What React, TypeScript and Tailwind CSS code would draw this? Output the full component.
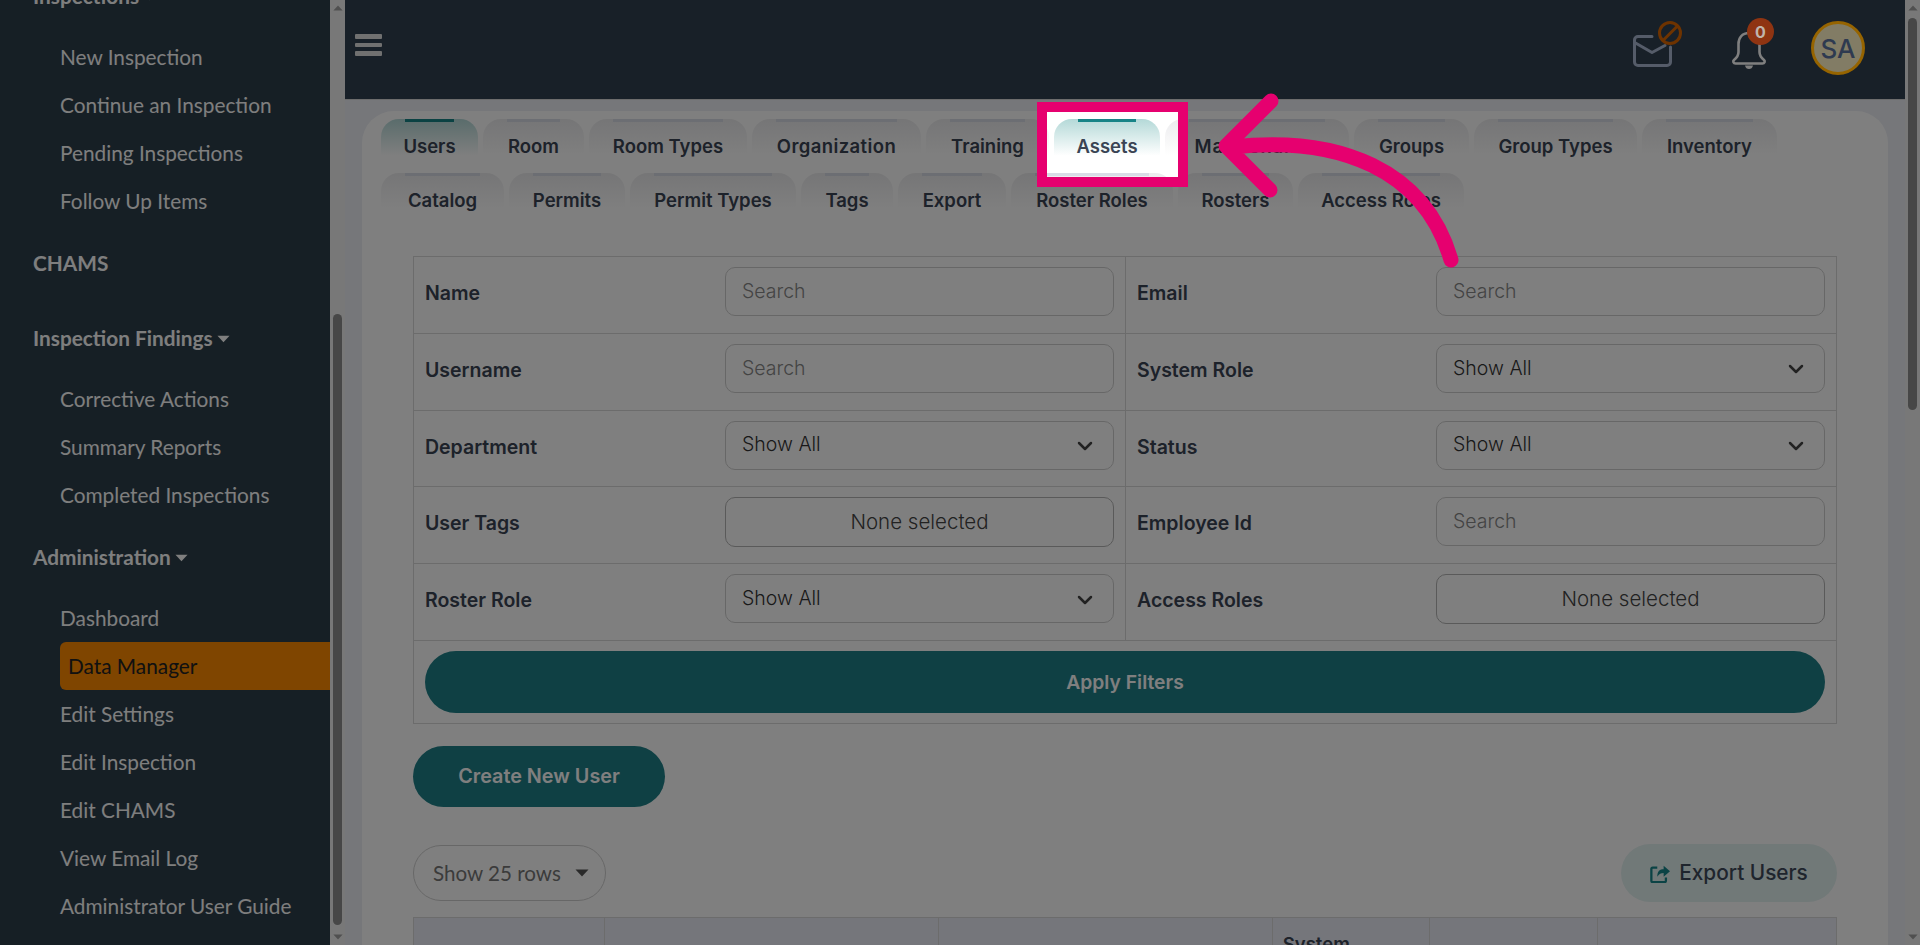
import { ChevronDown } from "lucide-react";

const sans = "font-['Inter','Noto_Sans',sans-serif]";

const tabRows = [
  [
    { name: "Users", w: "w-[97px]", active: true },
    { name: "Room", w: "w-[101px]" },
    { name: "Room Types", w: "w-[158px]" },
    { name: "Organization", w: "w-[169px] tracking-[0.4px]" },
    { name: "Training", w: "w-[123px]" },
    { name: "Assets", w: "w-[106px]", active: true },
    { name: "Maintenance", w: "w-[184px] tracking-[0.8px]" },
    { name: "Groups", w: "w-[115px]" },
    { name: "Group Types", w: "w-[163px]" },
    { name: "Inventory", w: "w-[135px]" },
  ],
  [
    { name: "Catalog", w: "w-[123px]" },
    { name: "Permits", w: "w-[116px]" },
    { name: "Permit Types", w: "w-[166px]" },
    { name: "Tags", w: "w-[92px]" },
    { name: "Export", w: "w-[108px]" },
    { name: "Roster Roles", w: "w-[162px]" },
    { name: "Rosters", w: "w-[115px]" },
    { name: "Access Roles", w: "w-[166px]" },
  ],
];

const filters = [
  { label: "Name", kind: "search" },
  { label: "Email", kind: "search" },
  { label: "Username", kind: "search" },
  { label: "System Role", kind: "select" },
  { label: "Department", kind: "select" },
  { label: "Status", kind: "select" },
  { label: "User Tags", kind: "multi" },
  { label: "Employee Id", kind: "search" },
  { label: "Roster Role", kind: "select" },
  { label: "Access Roles", kind: "multi" },
];

const columns = [
  { w: "w-[191px]", label: "" },
  { w: "w-[335px]", label: "" },
  { w: "w-[334px]", label: "" },
  { w: "w-[157px]", label: "System" },
  { w: "w-[169px]", label: "" },
  { w: "w-[238px]", label: "" },
];

function Caret({ className }: { className: string }) {
  return (
    <svg viewBox="0 0 14 8" className={className}>
      <path d="M0.5 0.5h13L7 7.5z" fill="currentColor" />
    </svg>
  );
}

function NavHead({ label, caret, className }: { label: string; caret?: boolean; className?: string }) {
  return (
    <div className={`flex h-[48px] items-center gap-[4px] pl-[33px] text-[20.800px] font-bold text-[#fdfdfd] ${className ?? ""}`}>
      {label}
      {caret && <Caret className="mt-[1px] h-[8px] w-[13px] text-white" />}
    </div>
  );
}

function NavItem({ label, active }: { label: string; active?: boolean }) {
  if (active) {
    return (
      <div className="ml-[60px] flex h-[48px] items-center rounded-l-[6px] bg-[#fe8a00] pl-[8px] text-[20.800px] text-[#222]">
        {label}
      </div>
    );
  }
  return <div className="flex h-[48px] items-center pl-[60px] text-[20.800px] text-[#fdfdfd]">{label}</div>;
}

function Sidebar() {
  return (
    <aside className="h-full w-[330px] shrink-0 overflow-hidden bg-[#2c3e4a] font-['Lato',sans-serif]">
      <div className="-mt-[28px]">
        <NavHead label="Inspections" caret className="mb-[13px]" />
        <NavItem label="New Inspection" />
        <NavItem label="Continue an Inspection" />
        <NavItem label="Pending Inspections" />
        <NavItem label="Follow Up Items" />
        <NavHead label="CHAMS" className="mt-[14px]" />
        <NavHead label="Inspection Findings" caret className="mt-[27px] mb-[13px]" />
        <NavItem label="Corrective Actions" />
        <NavItem label="Summary Reports" />
        <NavItem label="Completed Inspections" />
        <NavHead label="Administration" caret className="mt-[14px] mb-[13px]" />
        <NavItem label="Dashboard" />
        <NavItem label="Data Manager" active />
        <NavItem label="Edit Settings" />
        <NavItem label="Edit Inspection" />
        <NavItem label="Edit CHAMS" />
        <NavItem label="View Email Log" />
        <NavItem label="Administrator User Guide" />
      </div>
    </aside>
  );
}

function Scrollbar({ thumb }: { thumb: string }) {
  return (
    <div className="flex h-full w-[15px] shrink-0 flex-col items-center bg-[#f1f1f1] py-[4px]">
      <Caret className="h-[8px] w-[10px] rotate-180 text-[#a0a0a0]" />
      <div className={`mt-[6px] w-[9px] rounded-full bg-[#8f8f8f] ${thumb}`} />
      <div className="flex-1" />
      <Caret className="h-[8px] w-[10px] text-[#a0a0a0]" />
    </div>
  );
}

function Header() {
  return (
    <header className="flex h-[100px] shrink-0 justify-between border-b border-[#d8d8d8] bg-[#314050] pr-[40px] pl-[10px]">
      <div className="mt-[34px] flex h-[22px] w-[27px] flex-col gap-[4px]">
        <div className="h-[5px] rounded-[1px] bg-[#e0e0e0]" />
        <div className="h-[5px] rounded-[1px] bg-[#e0e0e0]" />
        <div className="h-[5px] rounded-[1px] bg-[#e0e0e0]" />
      </div>
      <div className="flex items-start pt-[21px]">
        <svg viewBox="0 0 50 48" className="h-[48px] w-[50px]">
          <path
            d="M20 15.500H6A3.500 3.500 0 0 0 2.500 19v22A3.500 3.500 0 0 0 6 44.500h29a3.500 3.500 0 0 0 3.500-3.500V26M3.500 22 20 31.500 33 24.500"
            fill="none"
            stroke="#aab8d2"
            strokeWidth="3"
            strokeLinecap="round"
            strokeLinejoin="round"
          />
          <circle cx="38" cy="12" r="10.500" fill="none" stroke="#dc6600" strokeWidth="3" />
          <path d="M31 19.500 45.500 5" stroke="#dc6600" strokeWidth="3" />
        </svg>
        <div className="relative ml-[49px] h-[48px] w-[36px]">
          <svg viewBox="0 0 36 40" className="absolute top-[9px] left-0 h-[40px] w-[36px]">
            <path
              d="M18 3c-7 0-10.500 5-10.500 11v8c0 4-2 6-4.500 8-1.500 1.500-.5 3.500 1.500 3.500h27c2 0 3-2 1.500-3.500-2.500-2-4.500-4-4.500-8v-8C28.500 8 25 3 18 3z"
              fill="none"
              stroke="#ffffff"
              strokeWidth="2.600"
            />
            <path d="M14 35.500h8c-.5 2.500-2 3.500-4 3.500s-3.500-1-4-3.500z" fill="#ffffff" />
          </svg>
          <div className={`absolute -top-[3px] left-[16px] z-30 flex h-[27px] w-[27px] items-center justify-center rounded-full bg-[#8f3412] text-[16px] font-bold text-[#c0b4ac] ${sans}`}>
            0
          </div>
        </div>
        <div className={`relative z-30 ml-[44px] flex h-[54px] w-[54px] items-center justify-center rounded-full border-[3px] border-[#966400] bg-[#827c65] text-[26px] font-medium text-[#2e3a50] ${sans}`}>
          SA
        </div>
      </div>
    </header>
  );
}

function Tab({ name, w, active }: { name: string; w: string; active?: boolean }) {
  return (
    <div
      className={`flex h-[53.500px] shrink-0 flex-col rounded-t-[18px] bg-gradient-to-b to-white to-[68%] ${w} ${
        active ? "from-[#b4d9d8]" : "from-[#ececee]"
      }`}
    >
      <div className={`mx-[24px] h-[3px] ${active ? "bg-[#178487]" : "bg-[#d9dce6]"}`} />
      <div className="mt-[11px] text-center text-[18.500px] leading-[26px] font-semibold whitespace-nowrap text-[#3a4454]">
        {name}
      </div>
    </div>
  );
}

function Filter({ label, kind }: { label: string; kind: string }) {
  return (
    <div className="flex h-[76.800px] items-start justify-between border-r border-b border-[#d9d9d9] pt-[10px] pr-[11px] pl-[11px] even:border-r-0">
      <span className="pt-[13px] text-[19.500px] leading-[26px] font-semibold text-[#3a4454]">{label}</span>
      {kind === "search" && (
        <div className="flex h-[49px] w-[389px] items-center rounded-[10px] border border-[#cfcfcf] pl-[16px] text-[19.500px] font-light text-[#888]">
          Search
        </div>
      )}
      {kind === "select" && (
        <div className="flex h-[49px] w-[389px] items-center justify-between rounded-[10px] border border-[#cfcfcf] pr-[16px] pl-[16px] text-[19.500px] font-light text-[#333]">
          Show All
          <ChevronDown className="mt-[2px] h-[24px] w-[24px] text-[#444]" strokeWidth={2.500} />
        </div>
      )}
      {kind === "multi" && (
        <div className="flex h-[50px] w-[389px] items-center justify-center rounded-[10px] border border-[#b4b4b4] text-[20.500px] font-light text-[#444]">
          None selected
        </div>
      )}
    </div>
  );
}

export default function App() {
  return (
    <div className={`relative flex h-[945px] w-[1920px] overflow-hidden ${sans}`}>
      <Sidebar />
      <Scrollbar thumb="hidden" />
      <main className="flex h-full min-w-0 flex-1 flex-col bg-[#eceef4]">
        <Header />
        <div className="mx-[17px] mt-[11px] flex-1 rounded-t-[32px] bg-white pt-[8px]">
          <div className="pl-[19px]">
            {tabRows.map((row, i) => (
              <div key={i} className="flex gap-[5px]">
                {row.map((t) => (
                  <Tab key={t.name} {...t} />
                ))}
              </div>
            ))}
          </div>
          <div className="px-[51px] pt-[30px]">
            <div className="grid grid-cols-[712px_1fr] border-t border-r border-l border-[#d9d9d9]">
              {filters.map((f) => (
                <Filter key={f.label} {...f} />
              ))}
              <div className="col-span-2 border-b border-[#d9d9d9] px-[11px] pt-[10px] pb-[10px]">
                <div className="flex h-[62px] items-center justify-center rounded-full bg-[#1f8088] text-[19.300px] font-semibold text-white">
                  Apply Filters
                </div>
              </div>
            </div>
            <div className="mt-[22px] flex h-[61px] w-[252px] items-center justify-center rounded-full bg-[#1f8088] text-[19.800px] font-semibold text-white">
              Create New User
            </div>
            <div className="mt-[37px] flex h-[58px] items-center justify-between">
              <div className="flex h-[56px] w-[193px] items-center rounded-full border border-[#cfcfcf] pl-[19px] font-['Lato',sans-serif] text-[20.600px] text-[#777]">
                Show 25 rows
                <Caret className="ml-[14px] h-[8px] w-[14px] text-[#555]" />
              </div>
              <div className="flex h-[58px] w-[216px] items-center justify-center gap-[9px] rounded-full bg-[#e3f2f1] text-[20.800px] font-medium text-[#3f4a5a]">
                <svg viewBox="0 0 22 22" className="h-[20px] w-[20px]">
                  <path
                    d="M8 5H3a1.500 1.500 0 0 0-1.500 1.500v13A1.500 1.500 0 0 0 3 21h13a1.500 1.500 0 0 0 1.500-1.500V16"
                    fill="none"
                    stroke="#17868a"
                    strokeWidth="2.500"
                  />
                  <path d="M8 15c0-6 3-8 7-8V3l7 6-7 6v-4c-3 0-5 1-7 4z" fill="#17868a" />
                </svg>
                Export Users
              </div>
            </div>
            <div className="mt-[15px] flex h-[70px] border border-[#d9d9d9] bg-[#ebedf6]">
              {columns.map((c, i) => (
                <div key={i} className={`border-r border-[#d9d9d9] pt-[13px] pl-[10px] text-[18.500px] font-semibold text-[#3a4454] last:border-r-0 ${c.w}`}>
                  {c.label}
                </div>
              ))}
            </div>
          </div>
        </div>
      </main>
      <Scrollbar thumb="h-[392px]" />
      <div className="absolute top-[314px] left-[333px] h-[611px] w-[9px] rounded-full bg-[#8f8f8f]" />
      {/* tour step highlight: the shadow dims the rest of the page */}
      <div className="absolute top-[102px] left-[1037px] z-20 h-[85px] w-[151px] border-[10px] border-[#e6006f] shadow-[0_0_0_3000px_rgba(0,0,0,0.5)]" />
      <svg viewBox="0 0 1920 945" className="pointer-events-none absolute inset-0 z-20 h-[945px] w-[1920px]">
        <path
          d="M1451 260C1425 170 1340 135 1232 147M1271 101 1226 146 1270 190"
          fill="none"
          stroke="#e6006f"
          strokeWidth="15"
          strokeLinecap="round"
          strokeLinejoin="round"
        />
      </svg>
    </div>
  );
}
